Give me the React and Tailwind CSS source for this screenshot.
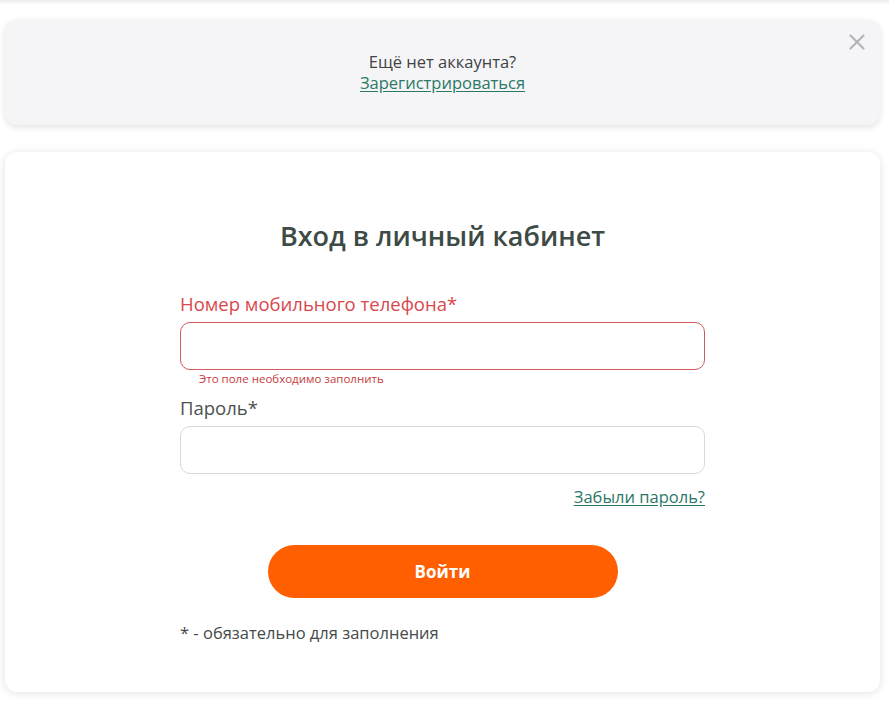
import { X } from 'lucide-react';

export default function App() {
  return (
    <div className="min-h-[703px] bg-white font-['Open_Sans',sans-serif] text-[#3f4644]">
      <div className="h-[5px] bg-gradient-to-b from-[#eceeed] to-white" />
      <div className="pl-[5px] pr-[9px] pt-[15px]">
        <div className="relative rounded-[12px] bg-[#f5f5f8] h-[105px] flex flex-col items-center justify-center shadow-[0_2px_6px_rgba(0,0,0,0.12)]">
          <p className="text-[16.5px] leading-[21px] text-[#3d4442]">Ещё нет аккаунта?</p>
          <a href="#" className="text-[16.5px] leading-[22px] text-[#2b7867] underline underline-offset-2">
            Зарегистрироваться
          </a>
          <button className="absolute right-[10px] top-[9px] text-[#b5b5b8]">
            <X size={26} strokeWidth={2} />
          </button>
        </div>

        <div className="mt-[27px] rounded-[12px] bg-white h-[540px] shadow-[0_1px_8px_rgba(0,0,0,0.12)] flex flex-col items-center pt-[66px]">
          <h1 className="text-[27px] leading-[36px] font-semibold text-[#3e4a46]">Вход в личный кабинет</h1>

          <form className="w-[525px] mt-[38px]">
            <label className="block text-[18.5px] leading-[23px] text-[#d8474c]">Номер мобильного телефона*</label>
            <input className="mt-[7px] block w-full h-[48px] rounded-[10px] border border-[#d05a5e] bg-white px-4 outline-none" />
            <p className="mt-[1px] pl-[19px] text-[11.5px] leading-[15px] text-[#c63b40]">Это поле необходимо заполнить</p>

            <label className="mt-[10px] block text-[18.5px] leading-[23px] text-[#4b5250]">Пароль*</label>
            <input
              type="password"
              className="mt-[7px] block w-full h-[48px] rounded-[10px] border border-[#d8d8d8] bg-white px-4 outline-none"
            />
            <div className="mt-[12px] flex justify-end">
              <a href="#" className="text-[16.5px] leading-[22px] text-[#2b7867] underline underline-offset-2">
                Забыли пароль?
              </a>
            </div>

            <div className="mt-[37px] flex justify-center">
              <button
                type="button"
                className="w-[350px] h-[53px] rounded-full bg-[#ff5f00] text-white text-[17px] font-bold"
              >
                Войти
              </button>
            </div>

            <p className="mt-[24px] text-[16.5px] leading-[22px] text-[#444b49]">* - обязательно для заполнения</p>
          </form>
        </div>
      </div>
    </div>
  );
}
